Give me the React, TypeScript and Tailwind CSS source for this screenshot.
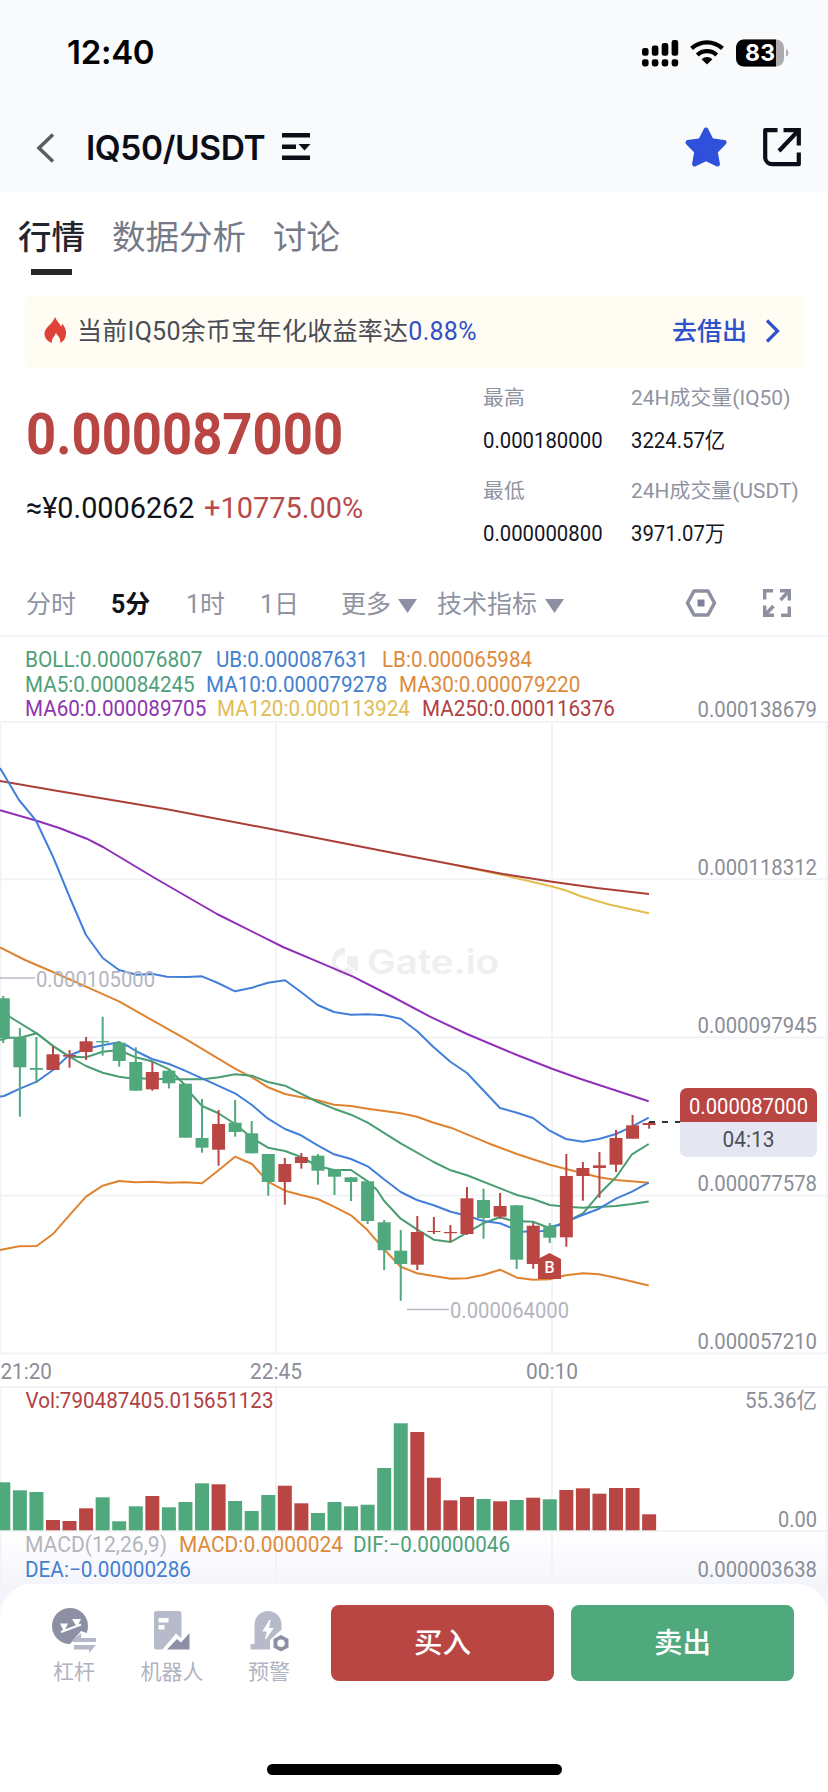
import React from 'react'
import clsx from 'clsx'

const RED = '#b94643'
const GREEN = '#50a97c'

type Candle = {
  color: 'r' | 'g'
  top: number
  bottom: number
  high: number
  low: number
  // top edge of the volume bar
  vol: number
}

const c = (color: 'r' | 'g', top: number, bottom: number, high: number, low: number, vol: number): Candle => ({
  color,
  top,
  bottom,
  high,
  low,
  vol,
})

const candles: Candle[] = [
  c('g', 998.3, 1038.3, 996, 1043, 1482.3),
  c('g', 1037.3, 1067.3, 1028, 1116.7, 1490.3),
  c('g', 1068, 1069.8, 1037, 1083, 1492),
  c('r', 1054.3, 1070, 1046, 1070, 1520),
  c('r', 1055, 1056.6, 1050, 1067.7, 1521),
  c('r', 1041.3, 1052, 1037, 1060, 1508.3),
  c('g', 1041, 1042.4, 1016.7, 1055.7, 1497.3),
  c('g', 1042.7, 1061, 1041, 1066.7, 1521.3),
  c('g', 1062, 1090.7, 1047.3, 1091, 1506.3),
  c('r', 1072, 1089.3, 1062, 1090.7, 1496),
  c('g', 1070.7, 1083.3, 1068.7, 1088.5, 1507.3),
  c('g', 1083.7, 1137.7, 1083.7, 1137.7, 1502),
  c('g', 1138, 1147.7, 1099, 1152.7, 1483.3),
  c('r', 1124, 1149.7, 1110, 1165.7, 1484.3),
  c('g', 1122.7, 1132, 1100, 1136.7, 1501),
  c('g', 1133.3, 1153.3, 1121, 1153.3, 1511),
  c('g', 1154, 1182, 1154, 1195.7, 1495),
  c('r', 1164, 1182, 1158, 1204.7, 1485.7),
  c('r', 1157, 1163, 1153, 1168.7, 1503.3),
  c('g', 1155.7, 1170.7, 1154, 1184.7, 1513),
  c('g', 1169, 1176.7, 1169, 1195, 1502),
  c('g', 1177.3, 1182, 1177, 1201, 1506.3),
  c('g', 1181.3, 1221, 1180.7, 1224, 1504.7),
  c('g', 1222.3, 1250.3, 1220, 1270, 1468),
  c('g', 1250.7, 1264, 1230, 1300.7, 1423.3),
  c('r', 1232, 1264.7, 1216, 1270, 1432),
  c('r', 1231, 1232, 1217, 1234, 1477.7),
  c('r', 1232, 1233.2, 1225, 1241.7, 1500.3),
  c('r', 1198.3, 1234, 1187, 1235, 1497),
  c('g', 1200, 1218, 1188.7, 1238.7, 1499),
  c('r', 1206, 1216.7, 1193, 1218.7, 1501.3),
  c('g', 1205.3, 1259.7, 1205, 1269, 1500),
  c('r', 1225.7, 1264, 1222.7, 1268.7, 1497.7),
  c('g', 1226, 1237.7, 1223, 1243, 1499.3),
  c('r', 1176, 1237.3, 1154, 1246.7, 1490),
  c('r', 1168, 1176, 1162, 1200.7, 1488.3),
  c('r', 1165.3, 1168, 1152, 1197.7, 1493.7),
  c('r', 1138, 1164.7, 1130, 1172, 1488),
  c('r', 1125.3, 1138.7, 1115, 1138.7, 1488),
  c('r', 1123, 1125, 1122, 1128.7, 1514.3),
]

const candleX = (i: number) => 3.3 + i * 16.56

const lines: { stroke: string; points: string }[] = [
  {
    stroke: '#e3bd4e',
    points: '457,865.5 503,875 552,886.5 567,890.7 580,896 610,904.7 649,913.3',
  },
  {
    stroke: '#ab3f38',
    points: '0,781 58,791 167,809.3 276,830 410,856.3 457,865.3 503,874 552,881.7 597,888 649,894',
  },
  {
    stroke: '#9030b8',
    points:
      '0,810.3 36.7,820.7 60,828.3 86.7,838.7 103,847 153,877 217,914 283,947 320,962.7 353,976.7 393,997 430,1016.7 467,1034 517,1055 552,1068.7 580,1078.7 648.7,1101.3',
  },
  {
    stroke: '#427fdb',
    points:
      '0,768 19,800 36,820.7 53,856.7 70,898 86,935 102.7,958 119,970 136.7,974.7 153,974 167,976.7 187,977 202,976.3 218,983 235,991.3 252,987.7 268,982.7 285,980.3 301,992 317.7,1005 334,1012 351,1014.7 367.7,1014.3 384,1015.3 400.7,1018.7 417,1031 433.7,1047.3 450.7,1062 467,1073 500,1108 517,1112.7 533,1118 549.7,1130.7 566,1139 583,1141.7 599,1139 616,1134 632,1126.7 648.7,1117.7',
  },
  {
    stroke: '#e08330',
    points:
      '0,947.3 25,960 53,972 86,986.7 119,1001.3 153,1020.7 185,1038.7 235,1068.7 252,1077.3 268,1087.3 285,1094 300,1097 317.7,1100.3 334,1104.7 351,1106 367.7,1108.7 400.7,1113.3 417,1116.7 433.7,1122.7 450.7,1127.7 487,1142.7 517,1154 549.7,1164.7 566,1169 599,1177.3 616,1180 648.7,1182.7',
  },
  {
    stroke: '#e08330',
    points:
      '0,1250 19,1246.3 36.7,1246 52.7,1234.3 69.3,1215.3 86,1196.7 102.7,1185.7 119,1181 135.7,1182.3 152,1181.7 169,1182.7 185,1182.3 202,1183.3 218,1170.7 235,1156.7 252,1164 268,1181.7 285,1190.7 300,1194.7 317.7,1199 334,1206.7 351,1215.3 367.7,1230.3 384,1249.3 400.7,1266.7 417,1273.3 433.7,1276 450.7,1278.7 467,1278.3 483,1275 500,1269.7 517,1277.7 533,1279.7 549.7,1279.3 566,1275.3 583,1273.3 599,1274.3 616,1277.7 648.7,1285.5',
  },
  {
    stroke: '#4a9d72',
    points:
      '0,1006 10,1017 36.7,1033.3 53,1046 69.3,1056.7 86,1066 102.7,1072.7 119,1076.7 130,1078.3 176,1079.3 203,1079.3 219,1077.3 235,1074.3 252,1075.7 268,1082 285,1085.7 317.7,1102 334,1108.7 351,1114.7 367.7,1122.7 400.7,1143.3 433.7,1162 450.7,1170.3 467,1175.3 517,1195 533,1199 549.7,1205 566,1206.7 583,1207.7 616,1206 632,1204 648.7,1201.5',
  },
  {
    stroke: '#4a9d72',
    points:
      '0,1040 8,1037.7 21,1037.5 36.7,1033.3 53,1046 69.3,1056.7 86,1057.3 102.7,1051.7 119,1050 135.7,1057.3 152,1061.3 169,1069.3 185,1085 193,1096 202,1106 218,1113 235,1124 252,1138 268,1147.7 285,1151 301,1157 317.7,1166 334,1170 351,1170 367.7,1181.3 377,1190 384,1200.7 400.7,1218.7 417,1229.3 433.7,1239.7 450.7,1242 467,1232.7 483,1223.3 500,1217.3 513,1221 533,1221.7 546.7,1227 560,1225 575,1217.5 583,1213.3 599,1194.3 616,1177.3 632,1154.3 648.7,1144',
  },
  {
    stroke: '#427fdb',
    points:
      '0,1096.5 4,1096 20,1088.7 36.7,1081.7 53,1070 68,1056 86,1048.7 102.7,1045.3 119,1042.3 128,1046 135.7,1051 152,1059 169,1064 185,1070.7 202,1078.3 218,1085.7 235,1093.3 252,1105 268,1118.7 285,1129 301,1135.3 317.7,1145.3 334,1154.3 351,1159 367.7,1166.3 384,1179.3 400.7,1192 417,1200 433.7,1205.3 450.7,1211.7 467,1215.7 483,1221 500,1223.3 510,1227.3 520,1231.7 543,1231 566,1221.7 580,1216 599,1208.7 616,1198.7 632,1191.7 648.7,1182.7',
  },
]

const legend = [
  [
    { text: 'BOLL:0.000076807', cls: 'text-[#4f9f79] w-[191px] scale-x-[0.948]' },
    { text: 'UB:0.000087631', cls: 'text-[#4580d0] w-[166px] scale-x-[0.936]' },
    { text: 'LB:0.000065984', cls: 'text-[#dd8a3c] scale-x-[0.936]' },
  ],
  [
    { text: 'MA5:0.000084245', cls: 'text-[#4f9f79] w-[181px] scale-x-[0.938]' },
    { text: 'MA10:0.000079278', cls: 'text-[#4580d0] w-[193px] scale-x-[0.938]' },
    { text: 'MA30:0.000079220', cls: 'text-[#dd8a3c] scale-x-[0.938]' },
  ],
  [
    { text: 'MA60:0.000089705', cls: 'text-[#8e36b0] w-[192px] scale-x-[0.938]' },
    { text: 'MA120:0.000113924', cls: 'text-[#e0bd55] w-[205px] scale-x-[0.938]' },
    { text: 'MA250:0.000116376', cls: 'text-[#b03f42] scale-x-[0.938]' },
  ],
]

const axis = [
  { y: 716.5, text: '0.000138679' },
  { y: 875, text: '0.000118312' },
  { y: 1033, text: '0.000097945' },
  { y: 1191, text: '0.000077578' },
  { y: 1349, text: '0.000057210' },
]

function StatusBar() {
  return (
    <div className="flex h-[105px] items-center justify-between pl-[67px] pr-[38px]">
      <span className="font-['Inter'] text-[33px] font-semibold leading-none tracking-[-0.3px] text-black">12:40</span>
      <svg width="148" height="30" viewBox="0 0 148 30">
        <g fill="#000">
          <rect x="0" y="10" width="6.600" height="7.800" rx="2.400" />
          <rect x="9.800" y="7.500" width="6.600" height="10.300" rx="2.400" />
          <rect x="19.700" y="5" width="6.600" height="12.800" rx="2.400" />
          <rect x="29.600" y="2" width="6.600" height="15.800" rx="2.400" />
          {[0, 9.8, 19.7, 29.6].map((x) => (
            <rect key={x} x={x} y="21.300" width="6.600" height="7.200" rx="2.400" />
          ))}
        </g>
        <g fill="none" stroke="#000" strokeWidth="4.200">
          <path d="M49.600 10.400A22.500 22.500 0 0 1 80.400 10.400" />
          <path d="M55.300 17A14 14 0 0 1 74.700 17" />
        </g>
        <path d="M65 26.500L59.600 21.200A8 8 0 0 1 70.400 21.200Z" fill="#000" />
        <rect x="94" y="1.500" width="48" height="27" rx="8" fill="#acacae" />
        <path d="M102 1.500H134V28.500H102A8 8 0 0 1 94 20.500V9.500A8 8 0 0 1 102 1.500Z" fill="#000" />
        <path d="M144 11a4.500 4.500 0 0 1 0 8z" fill="#acacae" />
        <text x="118" y="23" textAnchor="middle" fill="#fff" fontSize="23" fontWeight="700" fontFamily="Inter, sans-serif" textLength="30">
          83
        </text>
      </svg>
    </div>
  )
}

function Header() {
  return (
    <div className="flex h-[87px] items-center px-[36px]">
      <svg width="19" height="30" viewBox="0 0 19 30" fill="none" stroke="#5a5d66" strokeWidth="3.600" className="-mt-[2px]">
        <path d="M17 1.500L3 15L17 28.500" />
      </svg>
      <h1 className="ml-[31px] w-[195px] whitespace-nowrap font-['Inter'] text-[33.500px] font-semibold leading-none tracking-[-0.4px] text-[#0b0d17]">
        IQ50/USDT
      </h1>
      <svg width="30" height="28" viewBox="0 0 30 28" fill="#0b0d17" className="-mt-[3px]">
        <rect x="1" y="0" width="28" height="4.500" />
        <rect x="1" y="11.500" width="14" height="4.500" />
        <path d="M17.500 11h12l-6 6.500z" />
        <rect x="1" y="22.500" width="28" height="4.500" />
      </svg>
      <div className="-mr-[10px] ml-auto flex items-center gap-[34px]">
        <svg width="44" height="42" viewBox="0 0 44 42" className="-mt-[4px]">
          <path
            d="M22 4L27.400 14.800L40 16.500L31.200 25.500L33.400 38L22 32.600L10.600 38L12.800 25.500L4 16.500L16.600 14.800Z"
            fill="#2f50da"
            stroke="#2f50da"
            strokeWidth="5"
            strokeLinejoin="round"
          />
        </svg>
        <svg width="40" height="40" viewBox="0 0 40 40" fill="none" stroke="#0b0d17" strokeWidth="4.200" className="-mt-[3px]">
          <path d="M15.500 3.200H3.200V31A7 7 0 0 0 10.200 37.200H36.800V25.500" strokeLinejoin="round" />
          <path d="M21.500 3.200H36.800V18.500" />
          <path d="M36 4L17 24" />
        </svg>
      </div>
    </div>
  )
}

function Tabs() {
  return (
    <div className="flex h-[104px] items-start gap-[27px] pl-[18px] pt-[25px] text-[33.500px] leading-[42px] text-[#767a88]">
      <div className="flex flex-col items-center font-medium text-[#22252e]">
        行情
        <i className="mt-[10px] h-[6px] w-[41px] bg-[#26272b]" />
      </div>
      <div>数据分析</div>
      <div>讨论</div>
    </div>
  )
}

function Banner() {
  return (
    <div className="mx-[25px] flex h-[72px] items-center rounded-sm bg-[#fffcf3] pb-[2px] pl-[19px] pr-[23px] text-[25px] leading-none text-[#4a4c55]">
      <svg width="23" height="26" viewBox="0 0 23 26" fill="#de4238" className="-mt-[2px]">
        <path d="M11 0C12.500 4 16 6.500 17 9.500C18 8.800 18.200 7.500 18.200 6.500C21 10 22.500 13.500 22 17.500C21.600 21.500 19.500 24.500 16.300 26C17 22.500 15 19.500 11.800 16C11.500 19 7 21 8 26C3.500 24.500 .5 21 .5 16.500C.5 10.500 8.500 7.500 11 0Z" />
      </svg>
      <span className="ml-[10px] w-[350px] whitespace-nowrap tracking-[0.28px]">
        当前IQ50余币宝年化收益率达<span className="text-[#3050c8]">0.88%</span>
      </span>
      <span className="ml-auto mr-[18px] font-medium text-[#2f52cc]">去借出</span>
      <svg width="15" height="24" viewBox="0 0 15 24" fill="none" stroke="#2f52cc" strokeWidth="3.200">
        <path d="M2 1.500L12.500 12L2 22.500" />
      </svg>
    </div>
  )
}

function Stat({ label, value }: { label: string; value: string }) {
  return (
    <div className="h-[93px] whitespace-nowrap">
      <div className="text-[20.800px] leading-[30px] tracking-[0.100px] text-[#9093a0]">{label}</div>
      <div className="mt-[13px] origin-left scale-x-[0.945] text-[21.500px] leading-[30px] text-[#14161f]">{value}</div>
    </div>
  )
}

function Price() {
  return (
    <div className="flex h-[202px] pl-[26px]">
      <div className="w-[457px]">
        <div className="mt-[36px] h-[62px] origin-left scale-x-[0.923] text-[57px] font-bold leading-[62px] text-[#b94643]">
          0.000087000
        </div>
        <div className="mt-[24px] flex whitespace-nowrap text-[30px] leading-[36px]">
          <span className="w-[178px] origin-left scale-x-[0.96]">≈¥0.0006262</span>
          <span className="origin-left scale-x-[0.965] text-[#b94a4a]">+10775.00%</span>
        </div>
      </div>
      <div className="w-[148px] pt-[15px]">
        <Stat label="最高" value="0.000180000" />
        <Stat label="最低" value="0.000000800" />
      </div>
      <div className="pt-[15px]">
        <Stat label="24H成交量(IQ50)" value="3224.57亿" />
        <Stat label="24H成交量(USDT)" value="3971.07万" />
      </div>
    </div>
  )
}

function Caret({ className }: { className?: string }) {
  return (
    <svg width="19" height="14" viewBox="0 0 19 14" fill="#8d90a2" className={className}>
      <path d="M0 0H19L9.500 14Z" />
    </svg>
  )
}

function Periods() {
  return (
    <div className="flex h-[65px] items-center whitespace-nowrap pl-[26px] pt-[3px] text-[25px] leading-none text-[#8f93a2]">
      <span className="w-[85px]">分时</span>
      <span className="w-[75px] font-bold text-[#11131c]">5分</span>
      <span className="w-[74px]">1时</span>
      <span className="w-[81px]">1日</span>
      <span className="w-[57px]">更多</span>
      <Caret className="mt-[4px]" />
      <span className="ml-[20px] w-[108px]">技术指标</span>
      <Caret className="mt-[4px]" />
      <svg width="32" height="28" viewBox="0 0 32 28" className="-mt-[3px] ml-[121px]">
        <path d="M9 2H23L29.500 14L23 26H9L2.500 14Z" fill="none" stroke="#8d90a0" strokeWidth="3.600" strokeLinejoin="round" />
        <rect x="12.500" y="10.500" width="7" height="7" fill="#8080a0" />
      </svg>
      <svg width="28" height="28" viewBox="0 0 28 28" className="-mt-[3px] ml-[46px]" fill="none" stroke="#8d90a0" strokeWidth="3.400">
        <path d="M1.700 10.500V1.700H10M17 1.700H26.300V11.500M26.300 17.500V26.300H18M11 26.300H1.700V16.500" />
        <path d="M25 3L17.500 11M3 25L10.500 17" />
      </svg>
    </div>
  )
}

function Chart() {
  return (
    <svg
      width="828"
      height="1000"
      viewBox="0 637 828 1000"
      className="block"
      fontFamily="Roboto, 'Noto Sans CJK SC', sans-serif"
      fontSize="22"
    >
      <defs>
        <linearGradient id="fade" x1="0" y1="0" x2="0" y2="1">
          <stop offset="0" stopColor="#f4f5fb" stopOpacity="0" />
          <stop offset="1" stopColor="#f4f5fb" />
        </linearGradient>
      </defs>
      <rect x="0" y="1532" width="828" height="54" fill="url(#fade)" />
      <rect x="0" y="1586" width="828" height="60" fill="#f4f5fb" />

      <g stroke="#f2f3f6" strokeWidth="2">
        {[722, 879.3, 1037.5, 1195.5, 1353.5, 1387, 1531].map((y) => (
          <path key={y} d={`M0 ${y}H828`} />
        ))}
        {[0.5, 276, 552, 827].map((x) => (
          <path key={x} d={`M${x} 722V1353.500M${x} 1387V1590`} />
        ))}
      </g>

      {/* watermark */}
      <g fill="#efeff1">
        <path d="M345 947A14.500 14.500 0 1 0 355 973L348 966.500A7 7 0 1 1 345 955Z" />
        <path d="M347 956H358V965A12 12 0 0 1 357 972L347 964Z" />
        <text x="367" y="974" fontSize="34" fontWeight="600" fontFamily="Inter, sans-serif" textLength="132" lengthAdjust="spacingAndGlyphs">
          Gate.io
        </text>
      </g>

      <g fill="none" strokeWidth="2" strokeLinejoin="round">
        {lines.map((l, i) => (
          <polyline key={i} points={l.points} stroke={l.stroke} />
        ))}
      </g>

      <path d="M0 978H35M407 1309.500H449" stroke="#b9bcc6" strokeWidth="1.500" />
      <g fill="#b3b6bf">
        <text x="36" y="987" textLength="119" lengthAdjust="spacingAndGlyphs">
          0.000105000
        </text>
        <text x="450" y="1318" textLength="119" lengthAdjust="spacingAndGlyphs">
          0.000064000
        </text>
      </g>

      {candles.map((k, i) => {
        const x = candleX(i)
        const fill = k.color === 'r' ? RED : GREEN
        return (
          <g key={i} fill={fill}>
            <rect x={x - 6.5} y={k.top} width="13" height={k.bottom - k.top} />
            <rect x={x - 1} y={k.high} width="2" height={k.low - k.high} />
            <rect x={x - 7} y={k.vol} width="14" height={1530.3 - k.vol} />
          </g>
        )
      })}

      {/* buy marker */}
      <path d="M538 1259L549.500 1253L561 1259V1279H538Z" fill={RED} />
      <text x="549.500" y="1272.500" fontSize="16" fontWeight="500" textAnchor="middle" fill="#fff">
        B
      </text>

      {/* last price */}
      <path d="M649 1122H680" stroke="#33353d" strokeWidth="2" strokeDasharray="6 7" />
      <rect x="680" y="1088" width="137" height="69" rx="7" fill="#e4e7f2" />
      <path d="M680 1122V1095A7 7 0 0 1 687 1088H810A7 7 0 0 1 817 1095V1122Z" fill={RED} />
      <text x="689" y="1113.500" fill="#fff" textLength="119" lengthAdjust="spacingAndGlyphs">
        0.000087000
      </text>
      <text x="722.500" y="1147" fill="#4c4f5a" textLength="52" lengthAdjust="spacingAndGlyphs">
        04:13
      </text>

      <g fill="#8b8e97">
        {axis.map((a) => (
          <text key={a.y} x="697.500" y={a.y} textLength="119.500" lengthAdjust="spacingAndGlyphs">
            {a.text}
          </text>
        ))}
        <text x="0.500" y="1378.500" textLength="51.500" lengthAdjust="spacingAndGlyphs">
          21:20
        </text>
        <text x="250" y="1378.500" textLength="52" lengthAdjust="spacingAndGlyphs">
          22:45
        </text>
        <text x="526" y="1378.500" textLength="52" lengthAdjust="spacingAndGlyphs">
          00:10
        </text>
        <text x="745" y="1408" textLength="72" lengthAdjust="spacingAndGlyphs">
          55.36亿
        </text>
        <text x="778" y="1526.500" textLength="39" lengthAdjust="spacingAndGlyphs">
          0.00
        </text>
        <text x="697.500" y="1577" textLength="119.500" lengthAdjust="spacingAndGlyphs">
          0.000003638
        </text>
      </g>

      <text x="25.500" y="1408" fill="#b04245" textLength="248" lengthAdjust="spacingAndGlyphs">
        Vol:790487405.015651123
      </text>
      <text x="25" y="1552" fill="#b4b6bd" textLength="142" lengthAdjust="spacingAndGlyphs">
        MACD(12,26,9)
      </text>
      <text x="179" y="1552" fill="#dd8a3c" textLength="164" lengthAdjust="spacingAndGlyphs">
        MACD:0.0000024
      </text>
      <text x="353" y="1552" fill="#4f9f79" textLength="157" lengthAdjust="spacingAndGlyphs">
        DIF:−0.00000046
      </text>
      <text x="25" y="1577" fill="#4580d0" textLength="166" lengthAdjust="spacingAndGlyphs">
        DEA:−0.00000286
      </text>
    </svg>
  )
}

function Legend() {
  return (
    <div className="-mb-[85px] flex h-[85px] flex-col pl-[25px] pt-[11px] text-[22px] leading-[24.700px]">
      {legend.map((row, i) => (
        <div key={i} className="flex h-[24.700px] whitespace-nowrap">
          {row.map((item) => (
            <span key={item.text} className={clsx('block origin-left', item.cls)}>
              {item.text}
            </span>
          ))}
        </div>
      ))}
    </div>
  )
}

function LeverIcon() {
  return (
    <svg width="48" height="48" viewBox="0 0 48 48">
      <circle cx="20" cy="19" r="18" fill="#8d8fa4" />
      <path d="M11 25L31 17.500" stroke="#fff" strokeWidth="2.400" />
      <path d="M10 16.500H18L14 24.500ZM22 12H31L27 20Z" fill="#fff" />
      <path d="M20 37L31 24L48 30V46H24Z" fill="#fff" />
      <path d="M23 33L31 26V31H46V35H23ZM24 38H46L39 46V42.500H24Z" fill="#b4b8c8" />
    </svg>
  )
}

function RobotIcon() {
  return (
    <svg width="48" height="48" viewBox="0 0 48 48" className="-ml-[4px]">
      <path d="M10.500 4H33A2.500 2.500 0 0 1 35.500 6.500V42.500H10.500A2.500 2.500 0 0 1 8 40V6.500A2.500 2.500 0 0 1 10.500 4Z" fill="#b7bac9" />
      <path d="M12.500 11H22.500V15.500H12.500ZM12.500 18H18.500V22.500H12.500Z" fill="#fff" />
      <path d="M16 43L30 26.500L35 31L45 18V45H16Z" fill="#fff" />
      <path d="M21 42.500L31 32L35 35.500L43.500 26V42.500Z" fill="#8d8fa4" />
    </svg>
  )
}

function AlertIcon() {
  return (
    <svg width="48" height="48" viewBox="0 0 48 48" className="ml-[2px]">
      <path d="M8.500 37V17.500A13.500 13.500 0 0 1 35.500 17.500V42.500H4.500V37Z" fill="#b7bac9" />
      <path d="M24 13L17 24H21.500L19.500 32L27 21.500H22.500Z" fill="#fff" stroke="#fff" />
      <path d="M24 33L35 23L48 26V46H24Z" fill="#fff" />
      <path d="M35 28L42.500 32V40.500L35 44.500L27.500 40.500V32Z" fill="#8d8fa4" />
      <circle cx="35" cy="36.200" r="3.800" fill="#fff" />
    </svg>
  )
}

function BottomItem({ label, children }: { label: string; children: React.ReactNode }) {
  return (
    <div className="flex flex-col items-center">
      {children}
      <span className="mt-[4px] text-[21px] leading-[26px] text-[#b0b3c2]">{label}</span>
    </div>
  )
}

function BottomBar() {
  return (
    <div className="relative -mt-[53px] h-[208px] rounded-t-[32px] bg-white">
      <div className="flex h-[97px] pt-[21px]">
        <div className="mt-[2px] flex w-[331px] pl-[38px]">
          <div className="w-[72px]">
            <BottomItem label="杠杆">
              <LeverIcon />
            </BottomItem>
          </div>
          <div className="ml-[26px] w-[72px]">
            <BottomItem label="机器人">
              <RobotIcon />
            </BottomItem>
          </div>
          <div className="ml-[25px] w-[72px]">
            <BottomItem label="预警">
              <AlertIcon />
            </BottomItem>
          </div>
        </div>
        <button className="h-[76px] w-[223px] rounded-lg bg-[#b94643] pt-[3px] text-[28.500px] font-medium text-white">买入</button>
        <button className="ml-[17px] h-[76px] w-[223px] rounded-lg bg-[#50a97c] pt-[3px] text-[28.500px] font-medium text-white">卖出</button>
      </div>
      <div className="mx-auto mt-[83px] h-[11px] w-[295px] rounded-full bg-black" />
    </div>
  )
}

export default function App() {
  return (
    <div className="h-[1792px] w-[828px] overflow-hidden bg-white font-['Roboto','Noto_Sans_CJK_SC',sans-serif] text-[#11131c]">
      <div className="bg-[#f8fafc]">
        <StatusBar />
        <Header />
      </div>
      <Tabs />
      <Banner />
      <Price />
      <Periods />
      <div className="border-t-2 border-[#f3f4f7]">
        <Legend />
        <Chart />
      </div>
      <BottomBar />
    </div>
  )
}
